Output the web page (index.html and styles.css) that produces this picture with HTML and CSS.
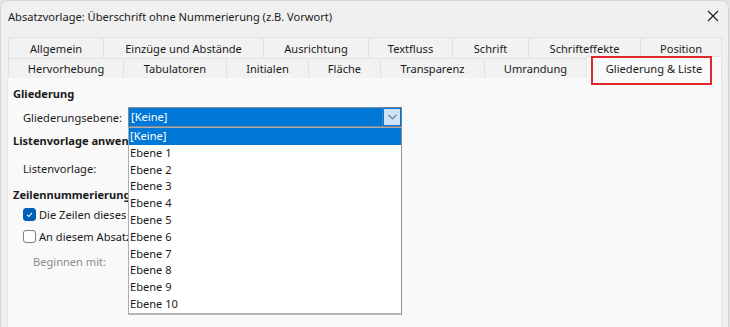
FILE: index.html
```html
<!DOCTYPE html>
<html lang="de">
<head>
<meta charset="utf-8">
<title>Absatzvorlage</title>
<link rel="stylesheet" href="styles.css">
</head>
<body>
<div class="window">
  <div class="titlebar">
    <span class="title">Absatzvorlage: Überschrift ohne Nummerierung (z.B. Vorwort)</span>
    <svg class="close" width="12" height="12" viewBox="0 0 12 12"><path d="M1 1 L11 11 M11 1 L1 11" stroke="#1b1b1b" stroke-width="1.1" fill="none"/></svg>
  </div>
  <div class="tabs">
    <div class="tabrow row1">
      <div class="tab">Allgemein</div>
      <div class="tab">Einzüge und Abstände</div>
      <div class="tab">Ausrichtung</div>
      <div class="tab">Textfluss</div>
      <div class="tab">Schrift</div>
      <div class="tab">Schrifteffekte</div>
      <div class="tab">Position</div>
    </div>
    <div class="tabrow row2">
      <div class="tab">Hervorhebung</div>
      <div class="tab">Tabulatoren</div>
      <div class="tab">Initialen</div>
      <div class="tab">Fläche</div>
      <div class="tab">Transparenz</div>
      <div class="tab">Umrandung</div>
      <div class="tab active">Gliederung &amp; Liste<span class="mark"></span></div>
    </div>
  </div>
  <div class="panel">
    <div class="section s1">Gliederung</div>
    <div class="field f1">
      <span class="label">Gliederungsebene:</span>
      <div class="combo">
        <div class="combo-text">[Keine]</div>
        <div class="combo-btn"><svg width="9" height="6" viewBox="0 0 9 6"><path d="M0.5 0.8 L4.5 4.8 L8.5 0.8" stroke="#5f6b78" stroke-width="1.1" fill="none"/></svg></div>
        <ul class="dropdown">
          <li class="sel">[Keine]</li>
          <li>Ebene 1</li>
          <li>Ebene 2</li>
          <li>Ebene 3</li>
          <li>Ebene 4</li>
          <li>Ebene 5</li>
          <li>Ebene 6</li>
          <li>Ebene 7</li>
          <li>Ebene 8</li>
          <li>Ebene 9</li>
          <li>Ebene 10</li>
        </ul>
      </div>
    </div>
    <div class="section s2">Listenvorlage anwenden</div>
    <div class="field f2"><span class="label">Listenvorlage:</span></div>
    <div class="section s3">Zeilennummerierung</div>
    <div class="check c1"><span class="box checked"><svg width="9" height="9" viewBox="0 0 9 9"><path d="M2 4.8 L3.8 6.5 L7 2.8" stroke="#fff" stroke-width="1.1" fill="none"/></svg></span>Die Zeilen dieses Absatzes mitzählen</div>
    <div class="check c2"><span class="box"></span>An diesem Absatz neu beginnen</div>
    <div class="field f3"><span class="label muted">Beginnen mit:</span></div>
  </div>
</div>
</body>
</html>
```
FILE: styles.css
```css
html, body {
  margin: 0;
  padding: 0;
}
body {
  background: #e4e4e4;
  font-family: "Noto Sans", "Open Sans", sans-serif;
  font-size: 11.1px;
  color: #1b1b1b;
  width: 730px;
  height: 327px;
  overflow: hidden;
}
.window {
  width: 729px;
  height: 340px;
  background: #f0f0f0;
  border: 1px solid #d6d6d6;
  border-radius: 8px 8px 0 0;
  box-sizing: border-box;
}
.titlebar {
  height: 30px;
  display: flex;
  align-items: center;
  justify-content: space-between;
  padding: 0 9px 0 7px;
}
.title {
  white-space: nowrap;
}
.close {
  display: block;
}
.tabs {
  margin: 6px 0 0 7px;
  width: 714px;
}
.tabrow {
  display: grid;
  height: 20px;
}
.row1 {
  height: 21px;
  grid-template-columns: 95px 160px 105px 84px 76px 112px 82px;
}
.row2 {
  grid-template-columns: 115px 103px 82px 72px 104px 102px 136px;
}
.tab {
  position: relative;
  display: flex;
  align-items: center;
  justify-content: center;
  padding-top: 1px;
  background: #f2f2f2;
  border-left: 1px solid #e1e1e1;
  border-top: 1px solid #e1e1e1;
  box-sizing: border-box;
  white-space: nowrap;
  line-height: 1;
}
.tab:last-child {
  border-right: 1px solid #e1e1e1;
}
.tab.active {
  background: #f9f9f9;
  margin-top: -2px;
  padding-top: 3px;
  border-color: #e4e4e4;
}
.mark {
  position: absolute;
  left: 4px;
  right: 9px;
  top: -1px;
  bottom: -7px;
  border: 2px solid #e3262b;
}
.panel {
  margin-left: 6px;
  width: 715px;
  height: 260px;
  background: #f9f9f9;
  border-left: 1px solid #e6e6e6;
  border-right: 1px solid #e6e6e6;
  box-sizing: border-box;
  padding: 7px 0 0 5px;
  display: flex;
  flex-direction: column;
}
.section {
  font-weight: bold;
  height: 18px;
  line-height: 18px;
  white-space: nowrap;
}
.field {
  height: 20px;
  display: flex;
  align-items: center;
  padding-left: 10px;
  white-space: nowrap;
}
.check {
  height: 18px;
  display: flex;
  align-items: center;
  padding-left: 10px;
  white-space: nowrap;
}
.f1 { margin-top: 4px; }
.s2 { margin-top: 5px; }
.f2 { margin-top: 8px; }
.s3 { margin-top: 8px; }
.c1 { margin-top: 1px; }
.c2 { margin-top: 4px; }
.f3 { margin-top: 6px; padding-left: 20px; }
.label {
  width: 105px;
  flex: none;
}
.muted {
  color: #8c8c8c;
}
.combo {
  position: relative;
  width: 274px;
  height: 20px;
  display: flex;
  background: #0078d7;
  box-sizing: border-box;
  border: 1px solid #6f7f8e;
}
.combo-text {
  flex: 1;
  color: #fff;
  border: 1px dotted #8c96a0;
  margin: -1px 0 -1px -1px;
  line-height: 18px;
  padding-left: 2px;
}
.combo-btn {
  width: 16px;
  margin: 1px;
  background: #cce4f7;
  display: flex;
  align-items: center;
  justify-content: center;
}
.dropdown {
  position: absolute;
  left: -1px;
  top: 19px;
  margin: 0;
  padding: 0;
  list-style: none;
  background: #fff;
  border: 1px solid #a9adb3;
  border-right-color: #8a9099;
  border-bottom: 2px solid #b4b8bd;
  box-sizing: content-box;
  width: 272px;
  z-index: 5;
}
.dropdown li {
  height: 16.8px;
  line-height: 16.8px;
  padding-left: 1px;
  color: #1b1b1b;
}
.dropdown li.sel {
  background: #0078d7;
  color: #fff;
}
.box {
  width: 13px;
  height: 13px;
  box-sizing: border-box;
  border: 1px solid #7f7f7f;
  border-radius: 3px;
  background: #fdfdfd;
  margin-right: 3px;
  display: flex;
  align-items: center;
  justify-content: center;
  flex: none;
}
.box.checked {
  background: #005fb8;
  border-color: #005fb8;
}
```
